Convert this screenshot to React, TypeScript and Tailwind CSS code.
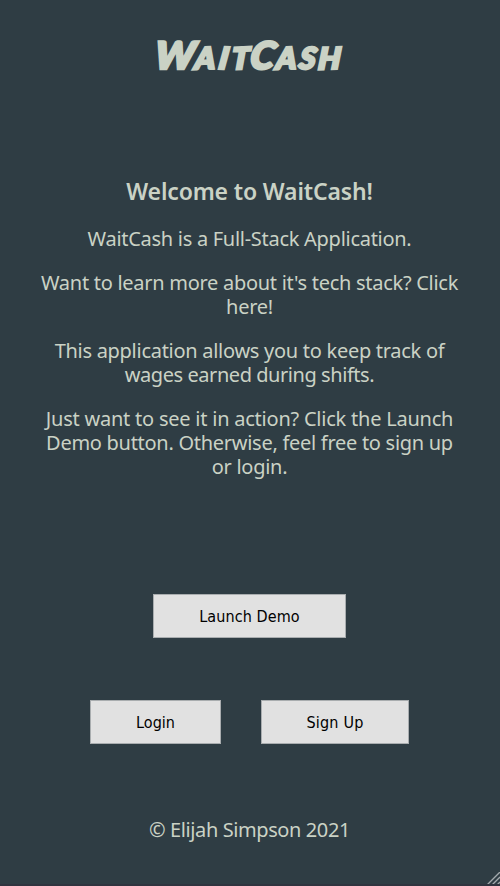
const buttonClass =
  "h-[44px] border border-[#a9adaf] bg-[#e1e1e1] pt-[2px] text-center font-['DejaVu_Sans_Condensed','DejaVu_Sans',sans-serif] text-[16px] leading-[40px] font-normal whitespace-nowrap text-black [font-stretch:condensed]";

export default function App() {
  return (
    <div className="relative flex h-[886px] w-[500px] flex-col items-center overflow-hidden border-b-2 border-[#30343f] bg-[#2f3d44] pr-px text-center font-['Noto_Sans',sans-serif] text-[20px] leading-[24px] tracking-[-0.28px] text-[#cad2c5]">
      <h1 className="mt-[24px] flex h-[60px] scale-x-[1.03] -skew-x-6 items-baseline font-['Lato',sans-serif] text-[38px] leading-[60px] font-black tracking-[1px] whitespace-nowrap italic [-webkit-text-stroke:2.6px_#cad2c5] [stroke-linejoin:round]">
        <span className="inline-block scale-x-105 tracking-[1px]">W</span>
        <span className="inline-block -rotate-2 text-[30px]">A</span>
        <span className="ml-[3px] inline-block rotate-2 text-[30px]">I</span>
        <span className="ml-[3px] inline-block -rotate-3 text-[30px]">T</span>
        <span className="inline-block rotate-3">C</span>
        <span className="inline-block -rotate-2 text-[30px]">A</span>
        <span className="ml-[2px] inline-block rotate-3 text-[30px]">S</span>
        <span className="ml-[2px] inline-block -rotate-2 text-[30px]">H</span>
      </h1>
      <main className="mt-[92px] flex flex-col items-center whitespace-nowrap">
        <h2 className="h-[30px] text-[23px] leading-[30px] font-semibold tracking-[-0.15px]">Welcome to WaitCash!</h2>
        <p className="mt-[21px]">WaitCash is a Full-Stack Application.</p>
        <p className="mt-[20px] flex flex-col items-center">
          <span>Want to learn more about it's tech stack? Click</span>
          <span>here!</span>
        </p>
        <p className="mt-[20px] flex flex-col items-center">
          <span>This application allows you to keep track of</span>
          <span className="tracking-[-0.44px]">wages earned during shifts.</span>
        </p>
        <p className="mt-[20px] flex flex-col items-center">
          <span className="tracking-[-0.23px]">Just want to see it in action? Click the Launch</span>
          <span>Demo button. Otherwise, feel free to sign up</span>
          <span>or login.</span>
        </p>
      </main>
      <button className={`mt-[115px] w-[193px] tracking-[0.1px] ${buttonClass}`}>Launch Demo</button>
      <div className="mt-[62px] flex gap-[40px]">
        <button className={`w-[131px] tracking-normal ${buttonClass}`}>Login</button>
        <button className={`w-[148px] tracking-[0.2px] ${buttonClass}`}>Sign Up</button>
      </div>
      <footer className="mt-[74px] tracking-[-0.4px]">© Elijah Simpson 2021</footer>
      <svg className="absolute right-0 -bottom-[2px] h-[14px] w-[14px]" viewBox="0 0 14 14" fill="none" stroke="#a4aaad" strokeWidth="1.4">
        <path d="M0 14 14 0M5 14l9-9M10 14l4-4" />
      </svg>
    </div>
  );
}
